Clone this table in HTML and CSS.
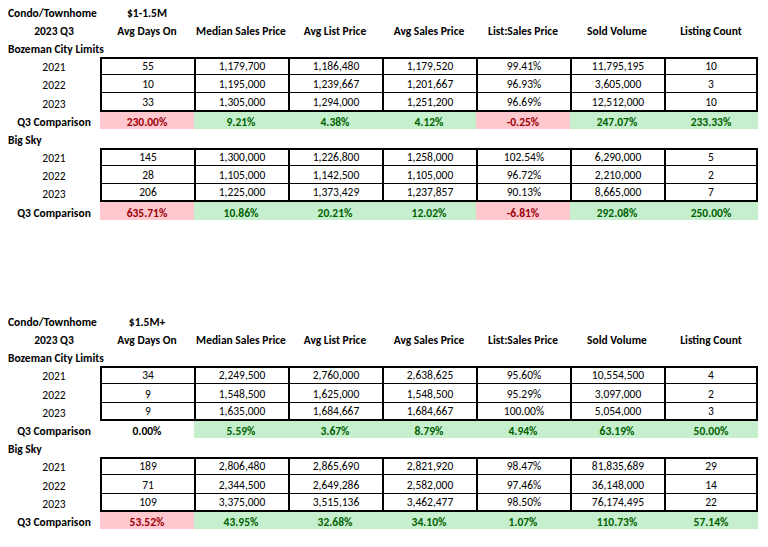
FILE: index.html
```html
<!DOCTYPE html>
<html lang="en">
<head>
<meta charset="utf-8">
<title>Condo/Townhome Q3 Comparison</title>
<link rel="stylesheet" href="styles.css">
</head>
<body>
<div class="sheet">

  <section class="block">
    <div class="row head"><div class="lbl left">Condo/Townhome</div><div class="c">$1-1.5M</div></div>
    <div class="row head">
      <div class="lbl">2023 Q3</div>
      <div class="c">Avg Days On</div><div class="c">Median Sales Price</div><div class="c">Avg List Price</div><div class="c">Avg Sales Price</div><div class="c">List:Sales Price</div><div class="c">Sold Volume</div><div class="c">Listing Count</div>
    </div>
    <div class="row head"><div class="lbl left nowrap">Bozeman City Limits</div></div>
    <div class="data">
      <div class="row"><div class="lbl">2021</div><div class="c">55</div><div class="c">1,179,700</div><div class="c">1,186,480</div><div class="c">1,179,520</div><div class="c">99.41%</div><div class="c">11,795,195</div><div class="c">10</div></div>
      <div class="row"><div class="lbl">2022</div><div class="c">10</div><div class="c">1,195,000</div><div class="c">1,239,667</div><div class="c">1,201,667</div><div class="c">96.93%</div><div class="c">3,605,000</div><div class="c">3</div></div>
      <div class="row"><div class="lbl">2023</div><div class="c">33</div><div class="c">1,305,000</div><div class="c">1,294,000</div><div class="c">1,251,200</div><div class="c">96.69%</div><div class="c">12,512,000</div><div class="c">10</div></div>
    </div>
    <div class="row cmp"><div class="lbl">Q3 Comparison</div><div class="c bad">230.00%</div><div class="c good">9.21%</div><div class="c good">4.38%</div><div class="c good">4.12%</div><div class="c bad">-0.25%</div><div class="c good">247.07%</div><div class="c good">233.33%</div></div>
    <div class="row head"><div class="lbl left">Big Sky</div></div>
    <div class="data">
      <div class="row"><div class="lbl">2021</div><div class="c">145</div><div class="c">1,300,000</div><div class="c">1,226,800</div><div class="c">1,258,000</div><div class="c">102.54%</div><div class="c">6,290,000</div><div class="c">5</div></div>
      <div class="row"><div class="lbl">2022</div><div class="c">28</div><div class="c">1,105,000</div><div class="c">1,142,500</div><div class="c">1,105,000</div><div class="c">96.72%</div><div class="c">2,210,000</div><div class="c">2</div></div>
      <div class="row"><div class="lbl">2023</div><div class="c">206</div><div class="c">1,225,000</div><div class="c">1,373,429</div><div class="c">1,237,857</div><div class="c">90.13%</div><div class="c">8,665,000</div><div class="c">7</div></div>
    </div>
    <div class="row cmp"><div class="lbl">Q3 Comparison</div><div class="c bad">635.71%</div><div class="c good">10.86%</div><div class="c good">20.21%</div><div class="c good">12.02%</div><div class="c bad">-6.81%</div><div class="c good">292.08%</div><div class="c good">250.00%</div></div>
  </section>

  <section class="block">
    <div class="row head"><div class="lbl left">Condo/Townhome</div><div class="c">$1.5M+</div></div>
    <div class="row head">
      <div class="lbl">2023 Q3</div>
      <div class="c">Avg Days On</div><div class="c">Median Sales Price</div><div class="c">Avg List Price</div><div class="c">Avg Sales Price</div><div class="c">List:Sales Price</div><div class="c">Sold Volume</div><div class="c">Listing Count</div>
    </div>
    <div class="row head"><div class="lbl left nowrap">Bozeman City Limits</div></div>
    <div class="data">
      <div class="row"><div class="lbl">2021</div><div class="c">34</div><div class="c">2,249,500</div><div class="c">2,760,000</div><div class="c">2,638,625</div><div class="c">95.60%</div><div class="c">10,554,500</div><div class="c">4</div></div>
      <div class="row"><div class="lbl">2022</div><div class="c">9</div><div class="c">1,548,500</div><div class="c">1,625,000</div><div class="c">1,548,500</div><div class="c">95.29%</div><div class="c">3,097,000</div><div class="c">2</div></div>
      <div class="row"><div class="lbl">2023</div><div class="c">9</div><div class="c">1,635,000</div><div class="c">1,684,667</div><div class="c">1,684,667</div><div class="c">100.00%</div><div class="c">5,054,000</div><div class="c">3</div></div>
    </div>
    <div class="row cmp"><div class="lbl">Q3 Comparison</div><div class="c">0.00%</div><div class="c good">5.59%</div><div class="c good">3.67%</div><div class="c good">8.79%</div><div class="c good">4.94%</div><div class="c good">63.19%</div><div class="c good">50.00%</div></div>
    <div class="row head"><div class="lbl left">Big Sky</div></div>
    <div class="data">
      <div class="row"><div class="lbl">2021</div><div class="c">189</div><div class="c">2,806,480</div><div class="c">2,865,690</div><div class="c">2,821,920</div><div class="c">98.47%</div><div class="c">81,835,689</div><div class="c">29</div></div>
      <div class="row"><div class="lbl">2022</div><div class="c">71</div><div class="c">2,344,500</div><div class="c">2,649,286</div><div class="c">2,582,000</div><div class="c">97.46%</div><div class="c">36,148,000</div><div class="c">14</div></div>
      <div class="row"><div class="lbl">2023</div><div class="c">109</div><div class="c">3,375,000</div><div class="c">3,515,136</div><div class="c">3,462,477</div><div class="c">98.50%</div><div class="c">76,174,495</div><div class="c">22</div></div>
    </div>
    <div class="row cmp"><div class="lbl">Q3 Comparison</div><div class="c bad">53.52%</div><div class="c good">43.95%</div><div class="c good">32.68%</div><div class="c good">34.10%</div><div class="c good">1.07%</div><div class="c good">110.73%</div><div class="c good">57.14%</div></div>
  </section>

</div>
</body>
</html>
```

FILE: styles.css
```css
* { box-sizing: border-box; }

html, body {
  margin: 0;
  padding: 0;
  background: #ffffff;
}

body {
  font-family: Carlito, "Lato", "Liberation Sans", sans-serif;
  font-size: 11.5px;
  color: #000000;
}

.sheet {
  padding: 2.4px 0 0 8px;
  display: flex;
  flex-direction: column;
  gap: 91px;
}

.block {
  display: flex;
  flex-direction: column;
}

.row {
  display: grid;
  grid-template-columns: 92px repeat(7, 94px);
  height: 18.2px;
  align-items: end;
}

.lbl,
.c {
  text-align: center;
  white-space: nowrap;
  line-height: 14px;
  padding-bottom: 1px;
}

.lbl.left {
  text-align: left;
}

.nowrap {
  overflow: visible;
}

.head .lbl,
.head .c,
.cmp .lbl,
.cmp .c {
  font-weight: bold;
}

/* bordered data rows */
.data .row .c {
  height: 100%;
  display: flex;
  align-items: flex-end;
  justify-content: center;
  border-left: 2px solid #000;
  border-bottom: 1px solid #000;
}

.data .row .c:last-child {
  border-right: 2px solid #000;
}

.data .row:first-child .c {
  border-top: 2px solid #000;
}

.data .row:last-child .c {
  border-bottom: 2px solid #000;
}

.cmp .c {
  height: 100%;
  display: flex;
  align-items: flex-end;
  justify-content: center;
  padding-bottom: 1px;
}

.cmp .good,
.cmp .bad {
  height: calc(100% - 1px);
  align-self: start;
  padding-bottom: 0;
}

.good {
  background: #c6efce;
  color: #006100;
}

.bad {
  background: #ffc7ce;
  color: #9c0006;
}
```
